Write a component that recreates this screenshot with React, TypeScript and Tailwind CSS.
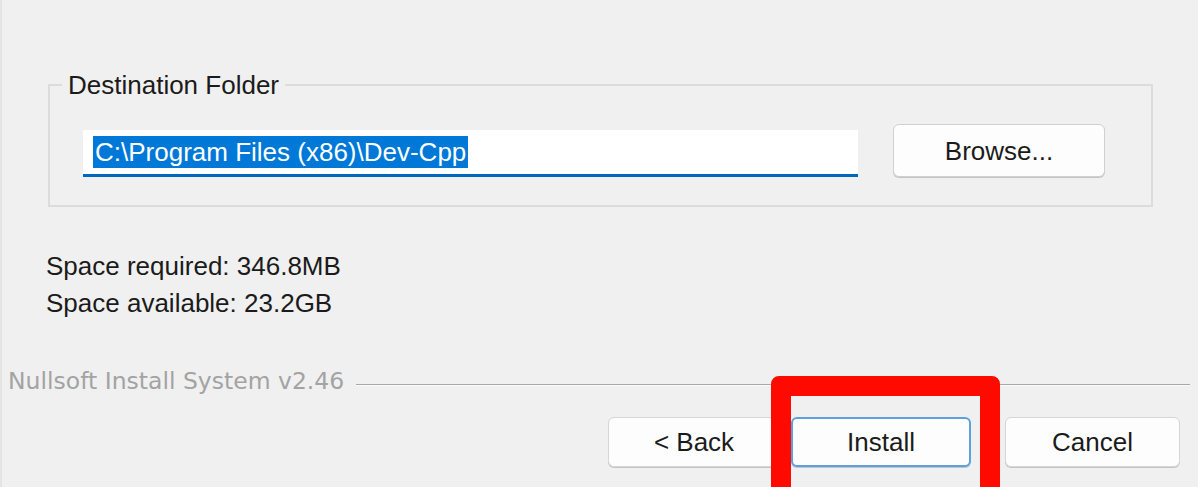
import React from "react";

const ui = { fontFamily: '"Liberation Sans", Arial, sans-serif' };
const legacy = { fontFamily: '"DejaVu Sans", Verdana, sans-serif' };

function DialogButton({ label, width, focused }: { label: string; width: string; focused?: boolean }) {
  return (
    <button
      className={
        "h-[50px] rounded-[6px] bg-[#fdfdfd] text-[26px] leading-none text-[#1b1b1b] shadow-[0_1px_0_#c4c4c4] " +
        width +
        (focused ? " border-2 border-[#5aa2df]" : " border border-[#d6d6d6]")
      }
      style={ui}
    >
      {label}
    </button>
  );
}

export default function App() {
  return (
    <div className="relative h-[487px] w-[1198px] overflow-hidden border-l-2 border-[#e4e4e4] bg-[#f0f0f0]" style={ui}>
      <div className="flex flex-col">
        {/* destination group */}
        <fieldset className="ml-[46px] mt-[70px] w-[1105px] border-2 border-[#dcdcdc]">
          <legend className="ml-[12px] px-[6px] text-[26px] leading-[30px] text-[#1b1b1b]">Destination Folder</legend>
          <div className="flex items-end justify-between pb-[28px] pl-[33px] pr-[46px] pt-[24px]">
            <div className="flex h-[47px] w-[775px] items-center border-b-[3px] border-[#0067c0] bg-white pl-[10px]">
              <span className="bg-[#0078d7] px-[2px] text-[26px] leading-[32px] text-white">C:\Program Files (x86)\Dev-Cpp</span>
            </div>
            <button className="h-[53px] w-[212px] rounded-[6px] border border-[#d0d0d0] bg-[#fdfdfd] text-[26px] leading-none text-[#1b1b1b] shadow-[0_1px_0_#c4c4c4]" style={ui}>
              Browse...
            </button>
          </div>
        </fieldset>

        {/* space info */}
        <div className="ml-[44px] mt-[41px] text-[26px] leading-[37px] text-[#1b1b1b]">
          <div>Space required: 346.8MB</div>
          <div>Space available: 23.2GB</div>
        </div>

        {/* branding line */}
        <div className="mt-[45px] flex items-center pl-[6px] pr-[8px]">
          <span className="whitespace-nowrap text-[23.5px] leading-[28px] text-[#a3a3a3]" style={legacy}>
            Nullsoft Install System v2.46
          </span>
          <div className="ml-[12px] mt-[8px] h-[2px] flex-1 border-b border-t border-b-[#fafafa] border-t-[#a8a8a8]" />
        </div>

        {/* buttons */}
        <div className="mt-[22px] flex justify-end pr-[18px]">
          <DialogButton label="< Back" width="w-[172px]" />
          <div className="ml-[11px]">
            <DialogButton label="Install" width="w-[180px]" focused />
          </div>
          <div className="ml-[34px]">
            <DialogButton label="Cancel" width="w-[175px]" />
          </div>
        </div>
      </div>

      {/* red annotation box */}
      <div className="absolute left-[769px] top-[376px] h-[140px] w-[229px] rounded-[8px] border-[20px] border-[#fe0a00]" />
    </div>
  );
}
